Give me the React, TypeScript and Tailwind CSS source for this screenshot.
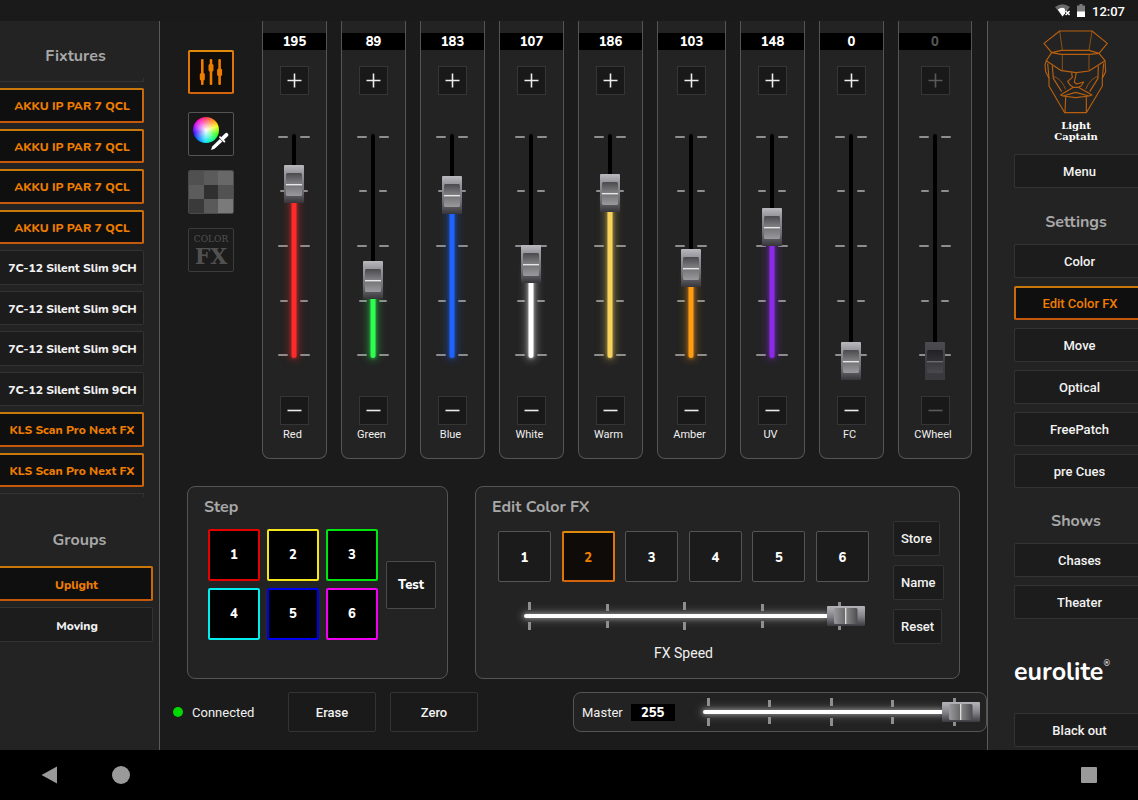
import { useId, useState } from "react";
import type { ReactNode } from "react";

const heading = "font-['Nunito','Lato',sans-serif] text-base leading-5 font-bold text-[#a8a8a8]";
const rounded = "font-['Nunito','Lato',sans-serif] font-extrabold";

type Channel = { name: string; value: number; color: string; disabled?: boolean };

const initialChannels: Channel[] = [
  { name: "Red", value: 195, color: "#ff2a2a" },
  { name: "Green", value: 89, color: "#2dff50" },
  { name: "Blue", value: 183, color: "#1f63ff" },
  { name: "White", value: 107, color: "#ffffff" },
  { name: "Warm", value: 186, color: "#f7d35c" },
  { name: "Amber", value: 103, color: "#ff9c12" },
  { name: "UV", value: 148, color: "#8b2be8" },
  { name: "FC", value: 0, color: "#ffffff" },
  { name: "CWheel", value: 0, color: "#ffffff", disabled: true },
];

const fixtures = [
  ...Array.from({ length: 4 }, () => ({ name: "AKKU IP PAR 7 QCL", on: true })),
  ...Array.from({ length: 4 }, () => ({ name: "7C-12 Silent Slim 9CH", on: false })),
  ...Array.from({ length: 2 }, () => ({ name: "KLS Scan Pro Next FX", on: true })),
];

const steps = [
  "border-[#e60000]",
  "border-[#f5e61a]",
  "border-[#00e60f]",
  "border-[#00eeee]",
  "border-[#0000f0]",
  "border-[#f000f0]",
];

function VerticalKnob({ disabled }: { disabled?: boolean }) {
  const id = useId();
  return (
    <svg width="20" height="38" viewBox="0 0 20 38" aria-hidden="true">
      <defs>
        <linearGradient id={id + "b"} x1="0" y1="0" x2="0" y2="1">
          <stop offset="0" stopColor={disabled ? "#4c4c50" : "#b9b9be"} />
          <stop offset="0.2" stopColor={disabled ? "#46464b" : "#98989f"} />
          <stop offset="0.7" stopColor={disabled ? "#3a3a3f" : "#6c6c72"} />
          <stop offset="1" stopColor={disabled ? "#39393e" : "#36363a"} />
        </linearGradient>
        <linearGradient id={id + "t"} x1="0" y1="0" x2="0" y2="1">
          <stop offset="0" stopColor={disabled ? "#222225" : "#4a4a4c"} />
          <stop offset="1" stopColor={disabled ? "#333337" : "#868688"} />
        </linearGradient>
        <linearGradient id={id + "l"} x1="0" y1="0" x2="0" y2="1">
          <stop offset="0" stopColor={disabled ? "#39393d" : "#747476"} />
          <stop offset="1" stopColor={disabled ? "#4a4a4e" : "#9a9a9d"} />
        </linearGradient>
      </defs>
      <rect width="20" height="38" rx="1" fill={`url(#${id}b)`} />
      <rect x="2" y="8" width="16" height="12" rx="1.5" fill={`url(#${id}t)`} />
      <rect x="2" y="20" width="16" height="11" rx="1.5" fill={`url(#${id}l)`} />
      <rect x="2" y="19" width="16" height="1.4" fill={disabled ? "#6a6a6d" : "#e6e6e6"} />
    </svg>
  );
}

function HorizontalKnob() {
  const id = useId();
  return (
    <svg width="38" height="20" viewBox="0 0 38 20" aria-hidden="true">
      <defs>
        <linearGradient id={id + "b"} x1="0" y1="0" x2="0" y2="1">
          <stop offset="0" stopColor="#b4b4b9" />
          <stop offset="0.5" stopColor="#85858b" />
          <stop offset="1" stopColor="#3a3a40" />
        </linearGradient>
        <linearGradient id={id + "l"}>
          <stop offset="0" stopColor="#9a9a9c" />
          <stop offset="1" stopColor="#68686a" />
        </linearGradient>
        <linearGradient id={id + "r"}>
          <stop offset="0" stopColor="#8a8a8c" />
          <stop offset="1" stopColor="#4c4c4e" />
        </linearGradient>
      </defs>
      <rect width="38" height="20" rx="1" fill={`url(#${id}b)`} />
      <rect x="7" y="2" width="11.5" height="16" rx="1.5" fill={`url(#${id}l)`} />
      <rect x="18.5" y="2" width="12" height="16" rx="1.5" fill={`url(#${id}r)`} />
      <rect x="18" y="2" width="1.3" height="16" fill="#dcdcdc" />
    </svg>
  );
}

function VerticalFader({ channel, onChange }: { channel: Channel; onChange: (v: number) => void }) {
  const travel = Math.round((channel.value / 255) * 231);
  return (
    <div className="relative mt-[15px] mr-px h-[270px] w-9">
      <svg className="absolute inset-0" width="36" height="270" viewBox="0 0 36 270" aria-hidden="true">
        {[26, 80, 135, 190, 244].map((y, i) => (
          <g key={y} fill="#8e8e8e">
            <rect x={i % 2 ? 4 : 2} y={y} width={i % 2 ? 8 : 10} height="2" rx="1" />
            <rect x="24" y={y} width={i % 2 ? 8 : 10} height="2" rx="1" />
          </g>
        ))}
        <rect x="16" y="24" width="4" height="224" rx="2" fill="#000" />
      </svg>
      {channel.value > 0 && (
        <div
          className="absolute bottom-[22px] left-1/2 w-[5px] -translate-x-1/2 rounded-b-full"
          style={{
            height: Math.max(travel - 4, 0),
            background: channel.color,
            boxShadow: `0 0 3px 1px ${channel.color}55, 0 0 9px 2px ${channel.color}66`,
          }}
        />
      )}
      <div className="absolute left-1/2 -translate-x-1/2" style={{ bottom: travel }}>
        <VerticalKnob disabled={channel.disabled} />
      </div>
      <input
        type="range"
        min={0}
        max={255}
        value={channel.value}
        disabled={channel.disabled}
        aria-label={channel.name}
        onChange={(e) => onChange(Number(e.target.value))}
        className="absolute inset-0 h-full w-full cursor-pointer opacity-0 [direction:rtl] [writing-mode:vertical-lr]"
      />
    </div>
  );
}

function HorizontalFader({
  label,
  value,
  onChange,
  className,
}: {
  label: string;
  value: number;
  onChange: (v: number) => void;
  className: string;
}) {
  const shift = { left: `calc((100% - 38px) * ${value / 255})` };
  return (
    <div className={`relative flex h-7 items-center ${className}`}>
      <div className="absolute inset-y-0 right-6 left-1 flex items-center justify-between">
        {[0, 1, 2, 3, 4].map((i) => (
          <div key={i} className={`flex flex-col justify-between ${i % 2 ? "h-6" : "h-7"}`}>
            <span className={`w-[3px] bg-[#8e8e8e] ${i % 2 ? "h-[7px]" : "h-2"}`} />
            <span className={`w-[3px] bg-[#8e8e8e] ${i % 2 ? "h-[7px]" : "h-2"}`} />
          </div>
        ))}
      </div>
      <div
        className="h-1 rounded-l-full bg-white shadow-[0_0_4px_1px_#ffffff55,0_0_9px_3px_#ffffff33]"
        style={{ width: shift.left }}
      />
      <div className="absolute top-1" style={shift}>
        <HorizontalKnob />
      </div>
      <input
        type="range"
        min={0}
        max={255}
        value={value}
        aria-label={label}
        onChange={(e) => onChange(Number(e.target.value))}
        className="absolute inset-0 h-full w-full cursor-pointer opacity-0"
      />
    </div>
  );
}

function StepperButton({ sign, channel, onClick, className }: { sign: "+" | "-"; channel: Channel; onClick: () => void; className: string }) {
  return (
    <button
      type="button"
      disabled={channel.disabled}
      onClick={onClick}
      aria-label={`${sign === "+" ? "Increase" : "Decrease"} ${channel.name}`}
      className={`flex size-[29px] items-center justify-center border border-[#353535] bg-[#191919] ${channel.disabled ? "text-[#5a5a5a]" : "text-[#ececec]"} ${className}`}
    >
      <svg width="15" height="15" viewBox="0 0 15 15" fill="none" stroke="currentColor" strokeWidth="1.6" aria-hidden="true">
        <path d={sign === "+" ? "M0.5 7.5h14M7.5 0.5v14" : "M0.5 7.5h14"} />
      </svg>
    </button>
  );
}

function ChannelStrip({ channel, onChange }: { channel: Channel; onChange: (v: number) => void }) {
  const set = (v: number) => onChange(Math.min(255, Math.max(0, v)));
  return (
    <div className="flex flex-col items-center rounded-b-lg border border-t-0 border-[#555] bg-[#232323] pt-3 pb-4">
      <output
        className={`h-[17px] w-full bg-black pt-px text-center text-[13px] leading-[17px] ${rounded} ${channel.disabled ? "text-[#555]" : "text-white"}`}
      >
        {channel.value}
      </output>
      <StepperButton sign="+" channel={channel} onClick={() => set(channel.value + 1)} className="mt-4" />
      <VerticalFader channel={channel} onChange={set} />
      <StepperButton sign="-" channel={channel} onClick={() => set(channel.value - 1)} className="mt-4" />
      <span className="mt-0.5 pr-1 text-[11px] leading-[15px] text-[#f0f0f0]">{channel.name}</span>
    </div>
  );
}

function ListButton({ on, children, onClick, className = "" }: { on: boolean; children: ReactNode; onClick?: () => void; className?: string }) {
  return (
    <button
      type="button"
      onClick={onClick}
      aria-pressed={on}
      className={`flex items-center justify-center rounded-r-xs border-l-0 pt-0.5 pl-0.5 text-xs whitespace-nowrap ${rounded} ${
        on
          ? "border-2 border-t-[#c9780c] border-r-[#c9690c] border-b-[#c4590c] bg-[#0f0f0f] text-[#ee7d00]"
          : "border border-[#333] bg-[#1c1c1c] text-[#f2f2f2]"
      } ${className}`}
    >
      {children}
    </button>
  );
}

function MenuButton({ on = false, children, onClick, className = "" }: { on?: boolean; children: ReactNode; onClick?: () => void; className?: string }) {
  return (
    <button
      type="button"
      onClick={onClick}
      className={`flex h-[34px] w-full items-center justify-center rounded-l-xs pt-0.5 pl-1.5 text-[13px] font-medium ${
        on
          ? "border-2 border-r-0 border-t-[#c9780c] border-b-[#c4590c] border-l-[#c9690c] bg-[#0f0f0f] text-[#ee7d00]"
          : "border border-r-0 border-[#333] bg-[#1c1c1c] text-[#f2f2f2]"
      } ${className}`}
    >
      {children}
    </button>
  );
}

function ModeButtons() {
  const base = "flex h-11 w-[46px] items-center justify-center overflow-hidden rounded-xs";
  const tiles = ["#505050", "#5b5b5b", "#686868", "#5c5c5c", "#303030", "#525252", "#3a3a3a", "#5a5a5a", "#7a7a7a"];
  return (
    <div className="flex flex-col gap-3.5 pt-[29px]">
      <button type="button" aria-label="Faders" className={`${base} mb-1 border-2 border-t-[#e08a0c] border-r-[#dc760c] border-b-[#d4640c] border-l-[#dc760c] bg-[#0f0c09]`}>
        <svg width="24" height="28" viewBox="0 0 24 28" fill="#ee7d00" aria-hidden="true">
          <rect x="2" y="1" width="2.6" height="26" rx="1" />
          <rect x="10.7" y="1" width="2.6" height="26" rx="1" />
          <rect x="19.3" y="1" width="2.6" height="26" rx="1" />
          <rect x="0.8" y="15" width="5" height="7.5" rx="1.5" />
          <rect x="9.5" y="6" width="5" height="7.5" rx="1.5" />
          <rect x="18.1" y="10.5" width="5" height="7.5" rx="1.5" />
        </svg>
      </button>
      <button type="button" aria-label="Colour picker" className={`${base} relative border border-[#555] bg-[#181818]`}>
        <span className="absolute top-1 left-1 size-[26px] rounded-full bg-[radial-gradient(circle,#fff_0%,#ffffff80_35%,transparent_72%),conic-gradient(#ff2a50,#ff9000_40deg,#f0ff00_72deg,#2cff00_110deg,#00ff70_140deg,#00e0ff_185deg,#0060ff_225deg,#3000ff_255deg,#b000ff_290deg,#ff00c0_325deg,#ff2a50)]" />
        <svg className="absolute right-1 bottom-1" width="19" height="19" viewBox="0 0 19 19" aria-hidden="true">
          <path d="M1 18l1.2-3.6 7.6-7.4 2.6 2.5-7.8 7.3z" fill="#fff" />
          <path d="M10 5.2l4.4 4.4" stroke="#fff" strokeWidth="1.8" strokeLinecap="round" />
          <path d="M13 6.2l3.4-3.4" stroke="#fff" strokeWidth="3.8" strokeLinecap="round" />
        </svg>
      </button>
      <button type="button" aria-label="Matrix" className={`${base} border border-[#4a4a4a]`}>
        <svg className="size-full" viewBox="0 0 3 3" preserveAspectRatio="none" shapeRendering="crispEdges" aria-hidden="true">
          {tiles.map((fill, i) => (
            <rect key={i} x={i % 3} y={Math.floor(i / 3)} width="1" height="1" fill={fill} />
          ))}
        </svg>
      </button>
      <button
        type="button"
        className={`${base} flex-col border border-[#3c3c3c] bg-[#1c1c1c] font-['DejaVu_Serif',serif] text-[#515151]`}
      >
        <span className="text-[9px] leading-[11px]">COLOR</span>
        <span className="text-[22px] leading-[22px] font-bold">FX</span>
      </button>
    </div>
  );
}

function CaptainLogo() {
  return (
    <svg width="66" height="84" viewBox="190 90 198 252" fill="none" stroke="#b8600f" strokeWidth="3.4" strokeLinejoin="round" aria-hidden="true">
      <path d="M216 158L193 130 240 93H337L383 130 358 160 328 151H245L216 158L245 163H330L358 160" />
      <path d="M240 93L248 150M337 93L328 150M248 163V212M328 163V212" strokeWidth="2.2" />
      <path d="M216 158L200 182 245 212 290 218 328 213 376 182 358 160" />
      <path d="M200 182L196 195 198 215 208 235V258L255 338H320L368 258V235L378 215 376 182" />
      <path d="M204 190L208 235M372 190L368 235M218 197L221 235 246 275M356 197L355 235 330 275" />
      <path d="M221 229Q245 236 258 268M355 229Q331 236 318 268" strokeWidth="2.2" />
      <path d="M276 218L278 232 264 244 272 256 281 262M290 218L284 246 290 252 312 246 304 258 296 262H281" />
      <path d="M281 262L243 285 250 288 288 277 328 288 337 285 296 262M250 288L288 293 328 288M258 290L256 338M320 290V338" />
    </svg>
  );
}

function StatusBar() {
  return (
    <header className="flex h-[21px] shrink-0 items-center justify-end gap-[7px] bg-[#1a1a1a] pr-[13px] text-[13px] font-medium text-white">
      <svg width="15" height="13" viewBox="0 0 15 13" aria-hidden="true">
        <path d="M0 3Q7.5-2.6 15 3L7.5 12.5z" fill="#6a6a6a" />
        <path d="M2.8 5.4Q7.5 2.4 10 5.2V9.2L7.5 12.5z" fill="#fff" />
        <path d="M10.6 7l4 4M14.6 7l-4 4" stroke="#fff" strokeWidth="1.5" />
      </svg>
      <svg width="8" height="13" viewBox="0 0 8 13" aria-hidden="true">
        <path d="M2.5 0h3v1.5H8V13H0V1.5h2.5z" fill="#7a7a7a" />
        <path d="M0 7.5h8V13H0z" fill="#fff" />
      </svg>
      <span className="pt-0.5 leading-[21px]">12:07</span>
    </header>
  );
}

function FixturePanel() {
  const [selected, setSelected] = useState(() => fixtures.map((f) => f.on));
  const [group, setGroup] = useState("Uplight");
  return (
    <aside className="flex w-40 shrink-0 flex-col border-r border-[#5a5a5a] bg-[#232323]">
      <h2 className={`mt-[25px] pr-2 text-center ${heading}`}>Fixtures</h2>
      <div className="mt-3 mr-[15px] flex flex-col gap-1.5">
        <div className="h-1 border-r border-b border-[#333]" />
        <div className="grid h-[399px] auto-rows-fr gap-1.5">
          {fixtures.map((f, i) => (
            <ListButton
              key={i}
              on={selected[i]}
              onClick={() => setSelected(selected.map((s, j) => (j === i ? !s : s)))}
            >
              {f.name}
            </ListButton>
          ))}
        </div>
        <div className="h-1 border-t border-r border-[#333]" />
      </div>
      <h2 className={`mt-[33px] text-center ${heading}`}>Groups</h2>
      <div className="mt-4 mr-1.5 flex flex-col gap-1.5">
        {["Uplight", "Moving"].map((name) => (
          <ListButton key={name} on={group === name} onClick={() => setGroup(name)} className="h-[35px]">
            {name}
          </ListButton>
        ))}
      </div>
    </aside>
  );
}

function SettingsPanel() {
  const [active, setActive] = useState("Edit Color FX");
  return (
    <aside className="flex w-[151px] shrink-0 flex-col border-l border-[#5a5a5a] bg-[#232323] pl-[26px]">
      <div className="mt-[9px] flex flex-col items-center">
        <CaptainLogo />
        <div className="mt-1.5 text-center font-['DejaVu_Serif',serif] text-[10px] leading-[11px] font-bold text-white">
          Light
          <br />
          Captain
        </div>
      </div>
      <MenuButton className="mt-3">Menu</MenuButton>
      <h2 className={`mt-6 text-center ${heading}`}>Settings</h2>
      <div className="mt-3 flex flex-col gap-2">
        {["Color", "Edit Color FX", "Move", "Optical", "FreePatch", "pre Cues"].map((name) => (
          <MenuButton key={name} on={active === name} onClick={() => setActive(name)}>
            {name}
          </MenuButton>
        ))}
      </div>
      <h2 className={`mt-[23px] text-center ${heading}`}>Shows</h2>
      <div className="mt-3 flex flex-col gap-2">
        <MenuButton>Chases</MenuButton>
        <MenuButton>Theater</MenuButton>
      </div>
      <div className="mt-auto flex items-start font-['Nunito','Lato',sans-serif] text-[25px] leading-8 font-bold text-white">
        eurolite<span className="text-[8px] leading-4 font-normal">®</span>
      </div>
      <MenuButton className="mt-[25px] mb-[3px]">Black out</MenuButton>
    </aside>
  );
}

export default function App() {
  const [channels, setChannels] = useState(initialChannels);
  const [speed, setSpeed] = useState(255);
  const [master, setMaster] = useState(255);
  const [fx, setFx] = useState(2);

  const setChannel = (index: number, value: number) =>
    setChannels(channels.map((c, i) => (i === index ? { ...c, value } : c)));

  return (
    <div className="flex min-h-screen flex-col bg-[#1b1b1b] font-['Roboto',sans-serif] text-white">
      <StatusBar />
      <div className="flex flex-1">
        <FixturePanel />
        <main className="flex min-w-0 flex-1 flex-col">
          <div className="flex gap-7 pr-[15px] pl-7">
            <ModeButtons />
            <div className="grid flex-1 grid-cols-[65fr_65fr_65fr_65fr_65fr_69fr_65fr_65fr_74fr] gap-3.5">
              {channels.map((c, i) => (
                <ChannelStrip key={c.name} channel={c} onChange={(v) => setChannel(i, v)} />
              ))}
            </div>
          </div>

          <div className="mt-[27px] flex gap-[27px] px-[27px]">
            <section className="w-[261px] shrink-0 rounded-lg border border-[#555] bg-[#232323] pt-2.5 pr-2 pb-[38px] pl-4">
              <h2 className={heading}>Step</h2>
              <div className="mt-3 flex items-center gap-2 pl-1">
                <div className="grid grid-cols-3 gap-[7px]">
                  {steps.map((border, i) => (
                    <button key={i} type="button" className={`size-[52px] rounded-xs border-2 bg-black pt-0.5 text-[13px] ${rounded} ${border}`}>
                      {i + 1}
                    </button>
                  ))}
                </div>
                <button type="button" className={`h-12 w-[50px] rounded-xs border border-[#4a4a4a] bg-[#1b1b1b] pt-0.5 text-[13px] ${rounded}`}>
                  Test
                </button>
              </div>
            </section>

            <section className="flex min-w-0 flex-1 gap-6 rounded-lg border border-[#555] bg-[#232323] pr-4 pl-4">
              <div className="flex min-w-0 flex-1 flex-col pt-2.5">
                <h2 className={heading}>Edit Color FX</h2>
                <div className="mt-3.5 flex justify-between pl-1.5">
                  {[1, 2, 3, 4, 5, 6].map((n) => (
                    <button
                      key={n}
                      type="button"
                      aria-pressed={fx === n}
                      onClick={() => setFx(n)}
                      className={`h-[51px] w-[53px] rounded-xs pt-1 text-[13px] ${rounded} ${
                        fx === n
                          ? "border-2 border-t-[#e08a0c] border-r-[#dc760c] border-b-[#d4640c] border-l-[#dc760c] bg-[#0f0b08] text-[#ee7d00]"
                          : "border border-[#555] bg-[#1b1b1b] text-white"
                      }`}
                    >
                      {n}
                    </button>
                  ))}
                </div>
                <HorizontalFader label="FX Speed" value={speed} onChange={setSpeed} className="mt-5 mr-1 ml-8" />
                <span className="mt-3.5 pl-1.5 text-center text-sm leading-[18px] text-[#f0f0f0]">FX Speed</span>
              </div>
              <div className="mt-[34px] flex w-[50px] flex-col items-start gap-[9px]">
                {["Store", "Name", "Reset"].map((name) => (
                  <button
                    key={name}
                    type="button"
                    className="h-[35px] rounded-xs border border-[#333] bg-[#1c1c1c] px-[7px] text-[13px] font-medium text-[#f2f2f2]"
                  >
                    {name}
                  </button>
                ))}
              </div>
            </section>
          </div>

          <div className="mt-[13px] mb-4 flex items-center pl-[13px]">
            <span className="size-2.5 rounded-full bg-[#00d800]" />
            <span className="ml-[9px] w-24 pt-0.5 text-[13px] text-[#f0f0f0]">Connected</span>
            <div className="flex gap-3.5">
              {["Erase", "Zero"].map((name) => (
                <button
                  key={name}
                  type="button"
                  className="h-10 w-[88px] rounded-xs border border-[#333] bg-[#1a1a1a] pt-0.5 text-[13px] font-medium text-[#f2f2f2]"
                >
                  {name}
                </button>
              ))}
            </div>
            <div className="ml-[95px] flex h-10 flex-1 items-center rounded-lg border border-[#555] bg-[#222] pr-1.5 pl-2">
              <span className="pt-0.5 text-[13px] text-[#f0f0f0]">Master</span>
              <output className={`ml-2 h-[17px] w-11 bg-black pt-px text-center text-[13px] leading-[17px] ${rounded}`}>{master}</output>
              <HorizontalFader label="Master" value={master} onChange={setMaster} className="ml-7 flex-1" />
            </div>
          </div>
        </main>
        <SettingsPanel />
      </div>
      <nav className="flex h-[50px] shrink-0 items-center bg-black pr-[41px] pl-[41px] text-[#9a9a9a]">
        <button type="button" aria-label="Back">
          <svg width="16" height="18" viewBox="0 0 16 18" fill="currentColor" aria-hidden="true">
            <path d="M16 0.5v17L0.5 9z" />
          </svg>
        </button>
        <button type="button" aria-label="Home" className="ml-[55px] size-[18px] rounded-full bg-[#9a9a9a]" />
        <button type="button" aria-label="Recent apps" className="ml-auto size-4 rounded-[1px] bg-[#9a9a9a]" />
      </nav>
    </div>
  );
}
